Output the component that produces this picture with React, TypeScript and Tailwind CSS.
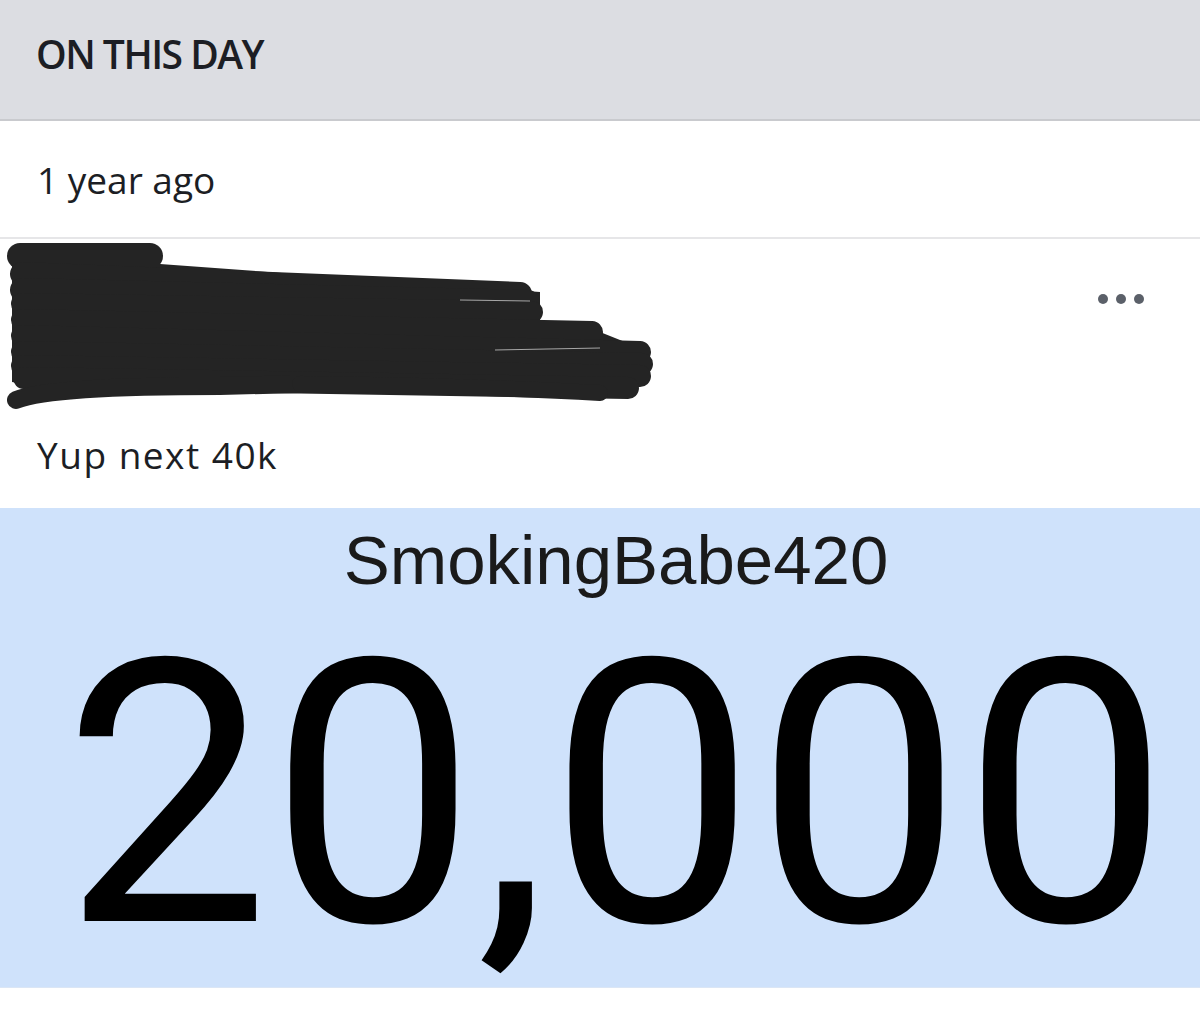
import React from "react";

function Scribble() {
  const fingers: [number, number, number, number, number][] = [
    [20, 254, 150, 254, 26],
    [22, 272, 520, 292, 24],
    [22, 288, 528, 300, 24],
    [22, 302, 532, 310, 22],
    [22, 318, 592, 330, 22],
    [22, 334, 640, 350, 22],
    [22, 350, 642, 362, 22],
    [22, 364, 640, 374, 22],
    [24, 376, 628, 386, 22],
  ];
  return (
    <svg width="660" height="172" viewBox="0 238 660 172" className="block">
      <path
        d="M12 262 L160 262 L540 290 L540 320 L590 326 L630 342 L636 388 L600 394 L320 382 L60 388 L12 380 Z"
        fill="#242424"
      />
      {fingers.map(([x1, y1, x2, y2, w], i) => (
        <line key={i} x1={x1} y1={y1} x2={x2} y2={y2} stroke="#242424" strokeWidth={w} strokeLinecap="round" />
      ))}
      <path d="M16 398 Q50 384 220 384 L300 382" stroke="#242424" strokeWidth="18" strokeLinecap="round" fill="none" />
      <path d="M300 382 Q480 384 600 391" stroke="#242424" strokeWidth="16" strokeLinecap="round" fill="none" />
      <line x1="460" y1="298" x2="530" y2="299" stroke="#ffffff" strokeWidth="1" opacity="0.6" />
      <line x1="495" y1="348" x2="600" y2="346" stroke="#ffffff" strokeWidth="1" opacity="0.6" />
    </svg>
  );
}

export default function App() {
  const hand = { fontFamily: '"Open Sans", "Noto Sans", sans-serif' };
  return (
    <div className="w-[1200px] h-[1012px] bg-white flex flex-col overflow-hidden">
      <div className="h-[121px] shrink-0 bg-[#dcdde2] border-b-2 border-[#c9cace] flex items-center pl-[36px]">
        <span style={hand} className="mb-[12px] text-[39px] font-semibold tracking-[-1.5px] text-[#1c1e24] leading-none">
          ON THIS DAY
        </span>
      </div>
      <div className="h-[118px] shrink-0 border-b-2 border-[#e6e6e8] flex items-center pl-[37px]">
        <span style={hand} className="text-[37px] text-[#1c1e24] leading-none">
          1 year ago
        </span>
      </div>
      <div className="relative h-[269px] shrink-0 flex flex-col">
        <div className="mt-[1px]">
          <Scribble />
        </div>
        <div style={hand} className="mt-[19px] pl-[37px] text-[37px] tracking-[1.5px] leading-[48px] text-[#1c1e24]">
          Yup next 40k
        </div>
        <div className="absolute top-[55px] left-[1098px] flex gap-[8px]">
          <span className="w-[10px] h-[10px] rounded-full bg-[#5b6069]" />
          <span className="w-[10px] h-[10px] rounded-full bg-[#5b6069]" />
          <span className="w-[10px] h-[10px] rounded-full bg-[#5b6069]" />
        </div>
      </div>
      <div className="h-[480px] shrink-0 bg-[#cfe2fb] border-b border-[#dbe6f5] flex flex-col items-center pl-[32px]">
        <div
          style={{ fontFamily: '"Liberation Sans", Arial, sans-serif' }}
          className="mt-[18px] text-[69px] leading-[69px] text-[#1a1a1a]"
        >
          SmokingBabe420
        </div>
        <div
          style={{ fontFamily: 'Roboto, "Liberation Sans", sans-serif' }}
          className="mt-[66px] text-[368px] leading-[270px] text-black"
        >
          20,000
        </div>
      </div>
    </div>
  );
}
